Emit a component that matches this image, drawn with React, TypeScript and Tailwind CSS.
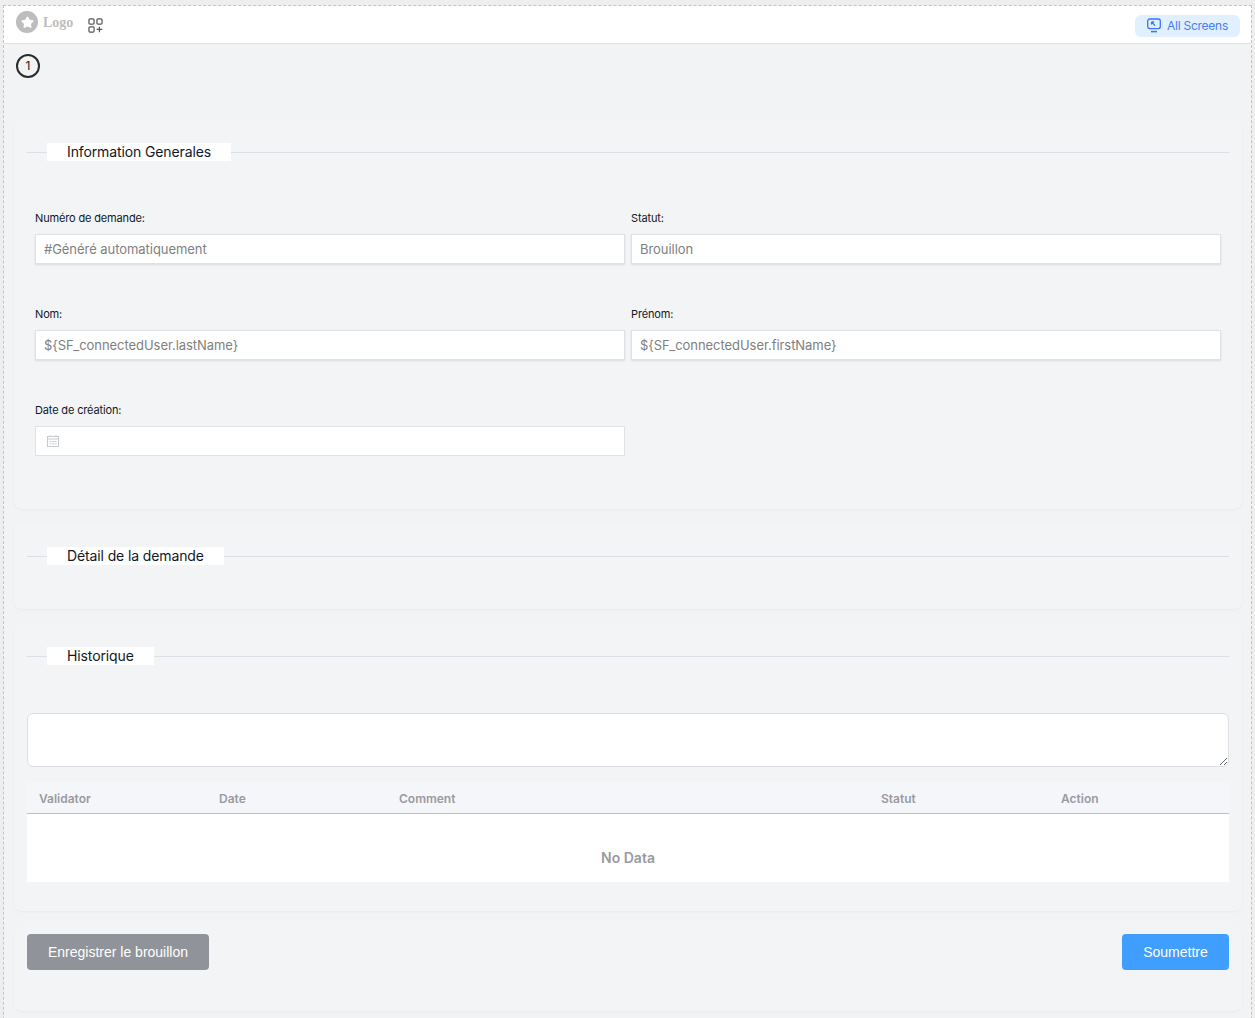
import { Star } from 'lucide-react'

const font = "font-['Inter','Liberation_Sans',sans-serif]"

function Legend({ title }: { title: string }) {
  return (
    <div className="flex h-[18px] items-center">
      <div className="h-px w-5 bg-[#dcdfe6]" />
      <div className="flex h-[18px] items-center bg-white px-5 pb-[2px] text-[14px] tracking-[-0.12px] text-[#111827]">{title}</div>
      <div className="h-px flex-1 bg-[#dcdfe6]" />
    </div>
  )
}

function Field({ label, placeholder }: { label: string; placeholder: string }) {
  return (
    <div className="flex flex-col">
      <label className="mb-3 h-[7px] text-[11px] leading-[7px] tracking-[-0.15px] text-[#111827]">{label}</label>
      <input
        readOnly
        placeholder={placeholder}
        className="h-[30px] w-full border border-[#dfe1e6] bg-white px-2 pb-px text-[13px] tracking-[-0.05px] shadow-[0_1px_2px_rgba(0,0,0,0.1)] outline-none placeholder:text-[#808080]"
      />
    </div>
  )
}

function AddAppsIcon() {
  return (
    <svg width="15" height="15" viewBox="0 0 16 16" fill="none" stroke="#555" strokeWidth="1.3">
      <rect x="1" y="1" width="5.5" height="5.5" rx="1.2" />
      <rect x="9.5" y="1" width="5.5" height="5.5" rx="1.2" />
      <rect x="1" y="9.5" width="5.5" height="5.5" rx="1.2" />
      <path d="M12.2 9.2v6M9.2 12.2h6" />
    </svg>
  )
}

function ScreenIcon() {
  return (
    <svg width="14" height="16" viewBox="0 0 14 16" fill="none" stroke="#3b74f6" strokeWidth="1.3">
      <rect x="0.7" y="1" width="12.6" height="9.6" rx="2" />
      <path d="M4.5 4h2.6M4.5 4v2.6M4.5 4l3.6 3.6" />
      <path d="M4 13.6h6" strokeWidth="1.5" />
    </svg>
  )
}

function CalendarIcon() {
  return (
    <svg width="12" height="12" viewBox="0 0 12 12" fill="none" stroke="#c5cad3" strokeWidth="1">
      <rect x="0.5" y="1.5" width="11" height="10" />
      <path d="M0.5 4h11M3 0v2M9 0v2" />
      <path d="M2.5 6.5h7M2.5 8.8h7" strokeDasharray="2 0.6" />
    </svg>
  )
}

export default function App() {
  const columns = ['Validator', 'Date', 'Comment', 'Statut', 'Action']

  return (
    <div className={`${font} h-[1018px] overflow-hidden bg-[#eeeeee] px-[3px] pt-[5px]`}>
      <div className="h-[1100px] border border-dashed border-[#c4c4c4] bg-[#f2f3f5]">
        {/* Header */}
        <div className="flex h-[38px] items-center justify-between border-b border-[#dfe1e5] bg-white pl-3 pr-[11px]">
          <div className="mb-[5px] flex items-center">
            <div className="flex h-[22px] w-[22px] items-center justify-center rounded-full bg-[#bdbdbd]">
              <Star size={13} fill="white" stroke="white" />
            </div>
            <span className="ml-[5px] font-['Liberation_Serif',serif] text-[14px] font-bold text-[#bdbdbd]">Logo</span>
            <span className="ml-[15px] mt-[6px] flex">
              <AddAppsIcon />
            </span>
          </div>
          <div className="mt-[2px] flex h-[22px] w-[105px] items-center justify-center gap-[6px] rounded-md bg-[#e0f0fe] text-[12px] tracking-[-0.25px] text-[#4a7cf7]">
            <ScreenIcon />
            All Screens
          </div>
        </div>

        <div className="px-[10px] pt-[10px]">
          <div className="ml-[2px] flex h-6 w-6 items-center justify-center rounded-full border-2 border-[#2b2b2b] text-[12px] text-[#222]">1</div>

          <div className="mt-[42px] flex w-[1228px] flex-col gap-[15px]">
            {/* Information generales */}
            <section className="h-[389px] rounded-lg bg-[#f3f4f6] px-[13px] pt-[23px] shadow-[0_1px_3px_rgba(0,0,0,0.04)]">
              <Legend title="Information Generales" />
              <div className="mt-[54px] grid grid-cols-[590px_590px] gap-x-[6px] gap-y-[47px] pl-2">
                <Field label="Numéro de demande:" placeholder="#Généré automatiquement" />
                <Field label="Statut:" placeholder="Brouillon" />
                <Field label="Nom:" placeholder="${SF_connectedUser.lastName}" />
                <Field label="Prénom:" placeholder="${SF_connectedUser.firstName}" />
                <div className="flex flex-col">
                  <label className="mb-3 h-[7px] text-[11px] leading-[7px] tracking-[-0.15px] text-[#111827]">Date de création:</label>
                  <div className="flex h-[30px] items-center border border-[#dfe1e6] bg-white pl-[11px]">
                    <CalendarIcon />
                  </div>
                </div>
              </div>
            </section>

            {/* Detail */}
            <section className="h-[85px] rounded-lg bg-[#f3f4f6] px-[13px] pt-[23px] shadow-[0_1px_3px_rgba(0,0,0,0.04)]">
              <Legend title="Détail de la demande" />
            </section>

            {/* Historique */}
            <section className="h-[287px] rounded-lg bg-[#f3f4f6] px-[13px] pt-[23px] shadow-[0_1px_3px_rgba(0,0,0,0.04)]">
              <Legend title="Historique" />
              <textarea className="mt-[48px] block h-[54px] w-full rounded-md border border-[#dcdfe6] bg-white outline-none" />
              <div className="mt-[15px]">
                <div className="grid h-[32px] grid-cols-[180px_180px_1fr_180px_180px] items-center border-b border-[#bdbdc2] bg-[#f5f6fa] pt-[2px]">
                  {columns.map((column) => (
                    <div key={column} className="pl-3 text-[12px] font-semibold text-[#9a9a9f]">{column}</div>
                  ))}
                </div>
                <div className="flex h-[68px] items-end justify-center bg-white pb-[14px] text-[14px] font-semibold text-[#9a9a9f]">No Data</div>
              </div>
            </section>

            {/* Actions */}
            <section className="flex h-[85px] items-start justify-between rounded-lg bg-[#f3f4f6] px-[13px] pt-2 font-['Liberation_Sans',sans-serif] shadow-[0_1px_3px_rgba(0,0,0,0.04)]">
              <button className="h-9 w-[182px] rounded bg-[#909399] text-[14px] text-white">Enregistrer le brouillon</button>
              <button className="h-9 w-[107px] rounded bg-[#409eff] text-[14px] text-white">Soumettre</button>
            </section>
          </div>
        </div>
      </div>
    </div>
  )
}
